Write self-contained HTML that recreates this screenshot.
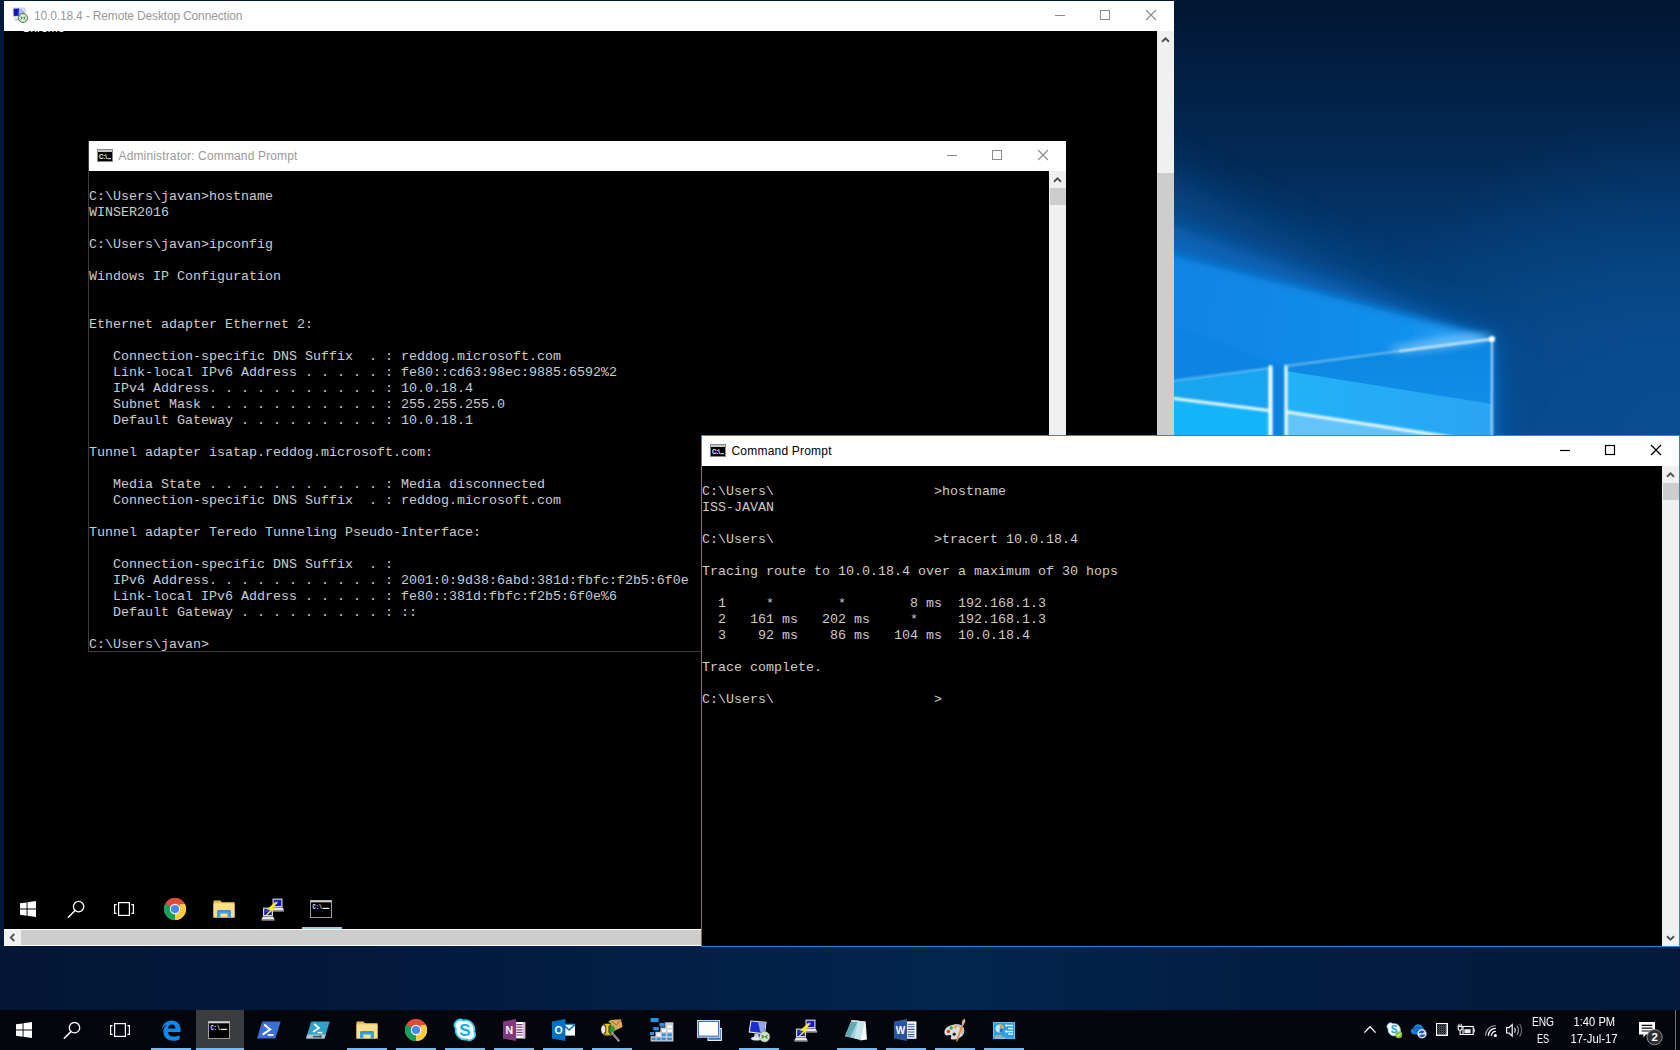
<!DOCTYPE html><html><head><meta charset="utf-8"><title>Desktop</title><style>
*{box-sizing:border-box;margin:0;padding:0}
html,body{width:1680px;height:1050px;overflow:hidden;background:#03193a}
body{position:relative;font-family:"Liberation Sans",sans-serif;font-size:12px}
.abs{position:absolute}
#wall{position:absolute;left:0;top:0;width:1680px;height:1010px}
.title{position:absolute;left:0;top:0;right:0;height:30px;background:#fff;font-size:12px;line-height:30px;white-space:nowrap}
.con{position:absolute;font-family:"Liberation Mono",monospace;font-size:13.333px;line-height:16px;color:#cccccc;white-space:pre;letter-spacing:0}
.sb{position:absolute;background:#f0f0f0}
.th{position:absolute;background:#cdcdcd}
svg{position:absolute;overflow:visible}
.tb{position:absolute;left:0;top:1010px;width:1680px;height:40px;background:#03060c}
.ul{position:absolute;height:2px;background:#76b9ed}
.tray{position:absolute;color:#fff;font-size:12px;line-height:14px;text-align:center;white-space:nowrap}
</style></head><body><svg id="wall" width="1680" height="1010" viewBox="0 0 1680 1010"><defs>
<linearGradient id="wbase" x1="0" y1="0" x2="0" y2="1">
 <stop offset="0" stop-color="#021631"/><stop offset="0.1" stop-color="#03224a"/><stop offset="0.17" stop-color="#032c59"/>
 <stop offset="0.24" stop-color="#04386f"/><stop offset="0.33" stop-color="#054484"/><stop offset="0.43" stop-color="#07488a"/><stop offset="0.6" stop-color="#053263"/><stop offset="0.93" stop-color="#03193a"/><stop offset="1" stop-color="#03152f"/>
</linearGradient>
<radialGradient id="wglow" cx="1230" cy="440" r="420" gradientUnits="userSpaceOnUse" gradientTransform="translate(1230 440) rotate(-18) scale(1 0.55) translate(-1230 -440)">
 <stop offset="0" stop-color="#0a86e4" stop-opacity="1"/><stop offset="0.45" stop-color="#0a7ad8" stop-opacity="0.95"/>
 <stop offset="0.75" stop-color="#0861b5" stop-opacity="0.6"/><stop offset="1" stop-color="#064a8c" stop-opacity="0"/>
</radialGradient>
<radialGradient id="wright" cx="1680" cy="440" r="330" gradientUnits="userSpaceOnUse">
 <stop offset="0" stop-color="#0a4f93" stop-opacity="0.9"/><stop offset="1" stop-color="#0a4f93" stop-opacity="0"/>
</radialGradient>
<linearGradient id="wbeam" x1="1492" y1="339" x2="1174" y2="300" gradientUnits="userSpaceOnUse">
 <stop offset="0" stop-color="#3fb0ff" stop-opacity="0.9"/><stop offset="0.25" stop-color="#1596f2" stop-opacity="0.75"/><stop offset="1" stop-color="#0c84e4" stop-opacity="0.55"/>
</linearGradient>
<linearGradient id="wpaneR" x1="0" y1="350" x2="0" y2="440" gradientUnits="userSpaceOnUse">
 <stop offset="0" stop-color="#0b87e2"/><stop offset="1" stop-color="#1493ea"/>
</linearGradient>
<linearGradient id="wpaneR2" x1="1285" y1="0" x2="1492" y2="0" gradientUnits="userSpaceOnUse">
 <stop offset="0" stop-color="#22b2f8"/><stop offset="1" stop-color="#2aa4f2"/>
</linearGradient>
<linearGradient id="wstrip" x1="0" y1="0" x2="1" y2="0">
 <stop offset="0" stop-color="#031634"/><stop offset="0.3" stop-color="#031b40"/><stop offset="0.57" stop-color="#03254f"/><stop offset="0.75" stop-color="#031d42"/><stop offset="1" stop-color="#031a3a"/>
</linearGradient>
<filter id="wb2" x="-20%" y="-20%" width="140%" height="140%"><feGaussianBlur stdDeviation="1.2"/></filter>
<filter id="wb5" filterUnits="userSpaceOnUse" x="1000" y="0" width="700" height="600"><feGaussianBlur stdDeviation="4"/></filter>
<filter id="wb16" filterUnits="userSpaceOnUse" x="1000" y="-100" width="800" height="700"><feGaussianBlur stdDeviation="10"/></filter>
<filter id="wb30" filterUnits="userSpaceOnUse" x="1000" y="-100" width="800" height="700"><feGaussianBlur stdDeviation="22"/></filter>
<clipPath id="wclipA"><rect x="1170" y="0" width="510" height="440"/></clipPath>
</defs><rect x="0" y="0" width="1680" height="1010" fill="url(#wbase)"/><rect x="1100" y="0" width="580" height="460" fill="url(#wright)"/><g clip-path="url(#wclipA)"><polygon points="1500,345 1100,140 1100,460 1500,460" fill="#0858a6" opacity="0.55" filter="url(#wb30)"/><polygon points="1496,340 1100,200 1100,460 1496,460" fill="#0a6ac2" opacity="0.85" filter="url(#wb16)"/><polygon points="1492,339 1100,236 1100,460 1492,460" fill="#0b84e2" filter="url(#wb5)"/><polygon points="1492,339 1100,238 1100,300 1285,367" fill="url(#wbeam)" filter="url(#wb5)"/></g><polygon points="1286,366 1492,339 1492,440 1286,440" fill="url(#wpaneR)"/><polygon points="1286,371 1492,404 1492,440 1286,440" fill="url(#wpaneR2)"/><polygon points="1286,412 1470,440 1286,440" fill="#62c4f9"/><polygon points="1174,381 1270,368 1270,440 1174,440" fill="#19a4f0"/><polygon points="1174,399 1270,411 1270,440 1174,440" fill="#14b4f8"/><rect x="1273" y="368" width="11" height="72" fill="#0a82e0"/><g filter="url(#wb2)" stroke="#fff" fill="none" stroke-linecap="round"><path d="M1270.5 367V440" stroke-width="4"/><path d="M1286 366V440" stroke-width="3"/><path d="M1286 366L1492 339" stroke-width="1.2" stroke="#bfe6ff"/><path d="M1400 351L1492 339" stroke-width="2" stroke="#fff"/><path d="M1492 339V440" stroke-width="1.6" stroke="#d8f0ff"/><path d="M1174 380.5L1270 368" stroke-width="1.2" stroke="#9fdcff"/><path d="M1174 398.5L1269 410.5" stroke-width="3" stroke="#e8f8ff"/><path d="M1288 412L1470 440" stroke-width="3" stroke="#e8f8ff"/></g><ellipse cx="1440" cy="343.5" rx="52" ry="5" transform="rotate(-7.7 1440 343.5)" fill="#a8dcff" opacity="0.6" filter="url(#wb5)"/><circle cx="1492" cy="339" r="3" fill="#fff" filter="url(#wb2)"/><rect x="0" y="940" width="1680" height="70" fill="url(#wstrip)"/><rect x="0" y="0" width="4" height="940" fill="#031a3d"/></svg><div class="abs" style="left:4px;top:1px;width:1170px;height:945px;background:#000"></div><div class="abs" style="left:4px;top:1px;width:1170px;height:30px;background:#fff"></div><div class="abs" style="left:34px;top:2px;height:30px;line-height:29px;color:#999;font-size:12px;letter-spacing:-0.16px;white-space:nowrap" id="rdptitle">10.0.18.4 - Remote Desktop Connection</div><svg class="abs" style="left:0;top:0" width="1" height="1"><path d="M1055 15.5h10" stroke="#8c8c8c" stroke-width="1" fill="none"/><rect x="1100.5" y="10.5" width="9" height="9" stroke="#8c8c8c" stroke-width="1" fill="none"/><path d="M1146 10l10 10M1156 10l-10 10" stroke="#8c8c8c" stroke-width="1.1" fill="none"/></svg><div class="abs" style="left:14px;top:31px;width:60px;height:2px;overflow:hidden"><div style="position:absolute;left:0;top:-8.6px;width:58px;text-align:center;color:#fff;font-size:12px;line-height:12px">Chrome</div></div><div class="sb" style="left:1157px;top:31px;width:17px;height:898px"></div><div class="th" style="left:1157px;top:173px;width:17px;height:739px"></div><svg class="abs" style="left:0;top:0" width="1" height="1"><path d="M1162.0 41.75L1165.5 38.25L1169.0 41.75" stroke="#505050" stroke-width="1.8" fill="none"/></svg><div class="sb" style="left:4px;top:929px;width:1170px;height:17px;background:#fff"></div><div class="sb" style="left:4px;top:930px;width:17px;height:15px"></div><div class="th" style="left:21px;top:930px;width:1136px;height:15px"></div><div class="sb" style="left:1157px;top:929px;width:17px;height:17px"></div><svg class="abs" style="left:0;top:0" width="1" height="1"><path d="M14.25 934.0L10.75 937.5L14.25 941.0" stroke="#505050" stroke-width="1.8" fill="none"/></svg><div class="abs" style="left:88px;top:141px;width:978px;height:511px;background:#000;border:1px solid #3c3c3c;border-top:none"></div><div class="abs" style="left:89px;top:141px;width:977px;height:30px;background:#fff"></div><svg class="abs" style="left:97px;top:149px" width="16" height="13" viewBox="0 0 16 13"><rect x="0" y="0" width="16" height="13" fill="#000"/><rect x="0.5" y="0.5" width="15" height="12" fill="none" stroke="#8a8a8a" stroke-width="1"/><rect x="1" y="1" width="14" height="2" fill="#c8c8c8"/><text x="2" y="10" font-family="Liberation Sans,sans-serif" font-weight="bold" font-size="6.5" fill="#fff" textLength="8" lengthAdjust="spacingAndGlyphs">C:\</text><rect x="10.4" y="9.2" width="3.6" height="1" fill="#fff"/></svg><div class="abs" style="left:118.5px;top:142px;height:30px;line-height:29px;color:#999;font-size:12px;letter-spacing:0.15px;white-space:nowrap" id="admtitle">Administrator: Command Prompt</div><svg class="abs" style="left:0;top:0" width="1" height="1"><path d="M947 155.5h10" stroke="#8c8c8c" stroke-width="1" fill="none"/><rect x="992.5" y="150.5" width="9" height="9" stroke="#8c8c8c" stroke-width="1" fill="none"/><path d="M1038 150l10 10M1048 150l-10 10" stroke="#8c8c8c" stroke-width="1.1" fill="none"/></svg><div class="sb" style="left:1049px;top:171px;width:17px;height:480px"></div><div class="th" style="left:1050px;top:188px;width:16px;height:17px"></div><svg class="abs" style="left:0;top:0" width="1" height="1"><path d="M1054.0 181.75L1057.5 178.25L1061.0 181.75" stroke="#505050" stroke-width="1.8" fill="none"/></svg><div class="con" style="left:89px;top:172.5px">
C:\Users\javan&gt;hostname
WINSER2016

C:\Users\javan&gt;ipconfig

Windows IP Configuration


Ethernet adapter Ethernet 2:

   Connection-specific DNS Suffix  . : reddog.microsoft.com
   Link-local IPv6 Address . . . . . : fe80::cd63:98ec:9885:6592%2
   IPv4 Address. . . . . . . . . . . : 10.0.18.4
   Subnet Mask . . . . . . . . . . . : 255.255.255.0
   Default Gateway . . . . . . . . . : 10.0.18.1

Tunnel adapter isatap.reddog.microsoft.com:

   Media State . . . . . . . . . . . : Media disconnected
   Connection-specific DNS Suffix  . : reddog.microsoft.com

Tunnel adapter Teredo Tunneling Pseudo-Interface:

   Connection-specific DNS Suffix  . :
   IPv6 Address. . . . . . . . . . . : 2001:0:9d38:6abd:381d:fbfc:f2b5:6f0e
   Link-local IPv6 Address . . . . . : fe80::381d:fbfc:f2b5:6f0e%6
   Default Gateway . . . . . . . . . : ::

C:\Users\javan&gt;</div><div class="abs" style="left:302px;top:927px;width:40px;height:2px;background:#9ccbe8"></div><div class="abs" style="left:701px;top:435px;width:979px;height:512px;background:#000;border:1px solid #2f86d1"></div><div class="abs" style="left:702px;top:436px;width:977px;height:30px;background:#fff"></div><svg class="abs" style="left:710px;top:444px" width="16" height="13" viewBox="0 0 16 13"><rect x="0" y="0" width="16" height="13" fill="#000"/><rect x="0.5" y="0.5" width="15" height="12" fill="none" stroke="#8a8a8a" stroke-width="1"/><rect x="1" y="1" width="14" height="2" fill="#c8c8c8"/><text x="2" y="10" font-family="Liberation Sans,sans-serif" font-weight="bold" font-size="6.5" fill="#fff" textLength="8" lengthAdjust="spacingAndGlyphs">C:\</text><rect x="10.4" y="9.2" width="3.6" height="1" fill="#fff"/></svg><div class="abs" style="left:731.5px;top:437px;height:30px;line-height:29px;color:#000;font-size:12px;letter-spacing:0.2px;white-space:nowrap" id="fronttitle">Command Prompt</div><svg class="abs" style="left:0;top:0" width="1" height="1"><path d="M1560 450.5h10" stroke="#000" stroke-width="1.2" fill="none"/><rect x="1605.5" y="445.5" width="9" height="9" stroke="#000" stroke-width="1.2" fill="none"/><path d="M1651 445l10 10M1661 445l-10 10" stroke="#000" stroke-width="1.32" fill="none"/></svg><div class="sb" style="left:1662px;top:466px;width:17px;height:480px"></div><div class="th" style="left:1663px;top:483px;width:16px;height:17px"></div><svg class="abs" style="left:0;top:0" width="1" height="1"><path d="M1667.0 476.75L1670.5 473.25L1674.0 476.75" stroke="#505050" stroke-width="1.8" fill="none"/></svg><svg class="abs" style="left:0;top:0" width="1" height="1"><path d="M1667.0 936.25L1670.5 939.75L1674.0 936.25" stroke="#505050" stroke-width="1.8" fill="none"/></svg><div class="con" style="left:702px;top:467.5px">
C:\Users\                    &gt;hostname
ISS-JAVAN

C:\Users\                    &gt;tracert 10.0.18.4

Tracing route to 10.0.18.4 over a maximum of 30 hops

  1     *        *        8 ms  192.168.1.3
  2   161 ms   202 ms     *     192.168.1.3
  3    92 ms    86 ms   104 ms  10.0.18.4

Trace complete.

C:\Users\                    &gt;</div><div class="tb"></div><svg class="abs" style="left:0px;top:0px" width="1" height="1" viewBox="0 0 1 1"><path d="M12.6 7.6L25.6 7.4L25.4 17L12.8 17.4Z" fill="#d0d4e0"/><path d="M13.6 8.8L19 8.6L18.8 15.8L13.8 16Z" fill="#1616b8"/><path d="M19 8.6L24.6 8.4L24.4 15.6L18.8 15.8Z" fill="#a9b6ee"/><path d="M20.6 8.5L24.6 8.4L24.5 11.4Z" fill="#e4e9fa"/><path d="M14 18.4L20 18L21 20.4L15 20.8Z" fill="#c9c9d0"/><circle cx="23" cy="18" r="4.5" fill="#d6edd0" stroke="#4f6c4f" stroke-width="1"/><path d="M20.7 16.6L22.3 18L20.7 19.4M25.3 16.6L23.7 18L25.3 19.4" fill="none" stroke="#2c7a2c" stroke-width="1"/></svg><svg class="abs" style="left:20px;top:901px" width="16" height="16" viewBox="0 0 16 16"><path fill="#fff" d="M0 2.3L6.6 1.4V7.6H0Z M7.5 1.25L16 0V7.6H7.5Z M0 8.5H6.6V14.7L0 13.8Z M7.5 8.5H16V16L7.5 14.8Z"/></svg><svg class="abs" style="left:0px;top:0px" width="1" height="1" viewBox="0 0 1 1"><circle cx="78.6" cy="906.6" r="5.2" fill="none" stroke="#fff" stroke-width="1.3"/><path d="M75.0 910.5L68.39999999999999 917.2" stroke="#fff" stroke-width="1.5" stroke-linecap="round"/></svg><svg class="abs" style="left:114px;top:902px" width="20" height="14" viewBox="0 0 20 14"><rect x="4.6" y="0.6" width="10.8" height="12.8" fill="none" stroke="#fff" stroke-width="1.2"/><path d="M2.6 2.6H0.6V11.4H2.6M17.4 2.6H19.4V11.4H17.4" fill="none" stroke="#fff" stroke-width="1.2"/></svg><svg class="abs" style="left:164.0px;top:898.0px" width="22" height="22" viewBox="-11 -11 22 22"><circle cx="0" cy="0" r="11" fill="#dd4b3e"/><path d="M0 0L-9.53 -5.5A11 11 0 0 0 0 11Z" fill="#1a9f5b"/><path d="M0 0L0 11A11 11 0 0 0 9.53 -5.5Z" fill="#fccd40"/><path d="M0 0L-9.53 -5.5L-4.4 -5.5Z" fill="#dd4b3e"/><path d="M-9.53 -5.5A11 11 0 0 1 9.53 -5.5L0 -5.5Z" fill="#dd4b3e"/><path d="M4.6 -5.1L9.8 -5.1A11 11 0 0 1 0.4 11L5 2.6Z" fill="#fccd40"/><path d="M-9.6 -5.4L-4.5 2.6L0.4 11A11 11 0 0 1 -9.6 -5.4Z" fill="#1a9f5b"/><circle cx="0" cy="0" r="5.2" fill="#f4f4f4"/><circle cx="0" cy="0" r="4.1" fill="#4687f1"/></svg><svg class="abs" style="left:213px;top:900px" width="22" height="18" viewBox="0 0 22 18"><path d="M0.5 1.2Q0.5 0.5 1.2 0.5H7.2L9 2.3H21.5V17.5H0.5Z" fill="#f5cd64"/><path d="M0.5 3.6H21.5V17.5H0.5Z" fill="#fbe08c"/><path d="M1 1H7L8.6 2.6H1Z" fill="#e5b64a"/><path d="M4 17.5V11.2Q4 10.2 5 10.2H17Q18 10.2 18 11.2V17.5H14.6V13.4H7.4V17.5Z" fill="#3d9fe2"/><path d="M5 10.2H17L18 11.6H4Z" fill="#2f8ad0"/></svg><svg class="abs" style="left:260.5px;top:897.5px" width="24" height="23" viewBox="0 0 24 23"><rect x="11.5" y="0.6" width="10" height="8.6" fill="#d4d4d8"/><rect x="12.7" y="1.7999999999999998" width="7.6" height="6.2" fill="#1818c8"/><rect x="13.7" y="3.0" width="3" height="2" fill="#3a3af0"/><path d="M9.9 12.2L11.5 9.6H21.5L23.1 12.2Z" fill="#e6e6ea"/><rect x="9.9" y="12.2" width="13.2" height="1.4" fill="#a9a9b0"/><rect x="2" y="9.6" width="10" height="8.6" fill="#d4d4d8"/><rect x="3.2" y="10.799999999999999" width="7.6" height="6.2" fill="#1818c8"/><rect x="4.2" y="12.0" width="3" height="2" fill="#3a3af0"/><path d="M0.3999999999999999 21.2L2 18.6H12L13.6 21.2Z" fill="#e6e6ea"/><rect x="0.3999999999999999" y="21.2" width="13.2" height="1.4" fill="#a9a9b0"/><path d="M14 4.6L6.6 11.4L10 11.4L5 17.4L14.2 10L10.8 10L16.4 4.8Z" fill="#f6ee1e" stroke="#f6ee1e" stroke-width="0.8" stroke-linejoin="round"/></svg><svg class="abs" style="left:310px;top:899.5px" width="22" height="18" viewBox="0 0 22 18"><rect x="0" y="0" width="22" height="18" fill="#000"/><rect x="0.5" y="0.5" width="21" height="17" fill="none" stroke="#9a9a9a" stroke-width="1"/><rect x="0.5" y="0.5" width="21" height="1.8" fill="#d0d0d0"/><text x="2.6" y="8.8" font-family="Liberation Mono,monospace" font-weight="bold" font-size="7" fill="#eee" textLength="9.6" lengthAdjust="spacingAndGlyphs">C:\</text><rect x="12.6" y="7.8" width="6.6" height="1.2" fill="#eee"/></svg><div class="abs" style="left:196px;top:1010px;width:48px;height:40px;background:#3a3c40"></div><svg class="abs" style="left:16px;top:1022px" width="16" height="16" viewBox="0 0 16 16"><path fill="#fff" d="M0 2.3L6.6 1.4V7.6H0Z M7.5 1.25L16 0V7.6H7.5Z M0 8.5H6.6V14.7L0 13.8Z M7.5 8.5H16V16L7.5 14.8Z"/></svg><svg class="abs" style="left:0px;top:0px" width="1" height="1" viewBox="0 0 1 1"><circle cx="74.5" cy="1027.7" r="5.2" fill="none" stroke="#fff" stroke-width="1.3"/><path d="M70.9 1031.6000000000001L64.3 1038.3" stroke="#fff" stroke-width="1.5" stroke-linecap="round"/></svg><svg class="abs" style="left:110px;top:1023px" width="20" height="14" viewBox="0 0 20 14"><rect x="4.6" y="0.6" width="10.8" height="12.8" fill="none" stroke="#fff" stroke-width="1.2"/><path d="M2.6 2.6H0.6V11.4H2.6M17.4 2.6H19.4V11.4H17.4" fill="none" stroke="#fff" stroke-width="1.2"/></svg><svg class="abs" style="left:161px;top:1020px" width="20" height="21" viewBox="0 0 20 21"><path fill="#1488ea" d="M0.8 9.4C1.4 4 5.4 0.4 10.6 0.4C16.4 0.4 19.6 4.6 19.6 9.6V12H7C7.2 15 9.6 16.6 12.8 16.6C15 16.6 17 16 18.6 15V19.2C16.8 20.2 14.6 20.7 12 20.7C6.2 20.7 2.4 17.2 2.4 11.6C2.4 8.6 3.8 6 6.2 4.4C3.6 5.4 1.8 7.2 0.8 9.4ZM7.1 8.4H14.4C14.3 6 13 4.4 10.8 4.4C8.8 4.4 7.4 6 7.1 8.4Z"/></svg><svg class="abs" style="left:208px;top:1020.5px" width="22" height="18" viewBox="0 0 22 18"><rect x="0" y="0" width="22" height="18" fill="#000"/><rect x="0.5" y="0.5" width="21" height="17" fill="none" stroke="#9a9a9a" stroke-width="1"/><rect x="0.5" y="0.5" width="21" height="1.8" fill="#d0d0d0"/><text x="2.6" y="8.8" font-family="Liberation Mono,monospace" font-weight="bold" font-size="7" fill="#eee" textLength="9.6" lengthAdjust="spacingAndGlyphs">C:\</text><rect x="12.6" y="7.8" width="6.6" height="1.2" fill="#eee"/></svg><svg class="abs" style="left:257px;top:1021px" width="24" height="18" viewBox="0 0 24 18"><path d="M5.6 0.4H23.2Q23.8 0.4 23.6 1L18.6 17Q18.4 17.6 17.8 17.6H0.6Q0 17.6 0.2 17L5 1Q5.2 0.4 5.6 0.4Z" fill="#3c6fd6"/><path d="M7.2 3.6L13.2 8.4L5.6 13.6" fill="none" stroke="#fff" stroke-width="2" stroke-linejoin="miter"/><path d="M10.8 14H16.6" stroke="#fff" stroke-width="1.8"/></svg><svg class="abs" style="left:306px;top:1020.5px" width="24" height="18" viewBox="0 0 24 18"><path d="M5.6 0.4H23.2Q23.8 0.4 23.6 1L18.6 17Q18.4 17.6 17.8 17.6H0.6Q0 17.6 0.2 17L5 1Q5.2 0.4 5.6 0.4Z" fill="#2fa4cb"/><path d="M1.4 13.4H19.8L18.6 17Q18.4 17.6 17.8 17.6H0.6Q0 17.6 0.2 17Z" fill="#b4c6cf"/><path d="M7.6 15.6H14.6" stroke="#4b5b63" stroke-width="1.6" stroke-linecap="round"/><circle cx="14.4" cy="15.6" r="1.3" fill="#4b5b63"/><path d="M8.2 3L13 7L7 11" fill="none" stroke="#fff" stroke-width="1.7" stroke-linejoin="miter"/><path d="M11.6 11.6H16.4" stroke="#fff" stroke-width="1.5"/></svg><svg class="abs" style="left:356px;top:1021px" width="22" height="18" viewBox="0 0 22 18"><path d="M0.5 1.2Q0.5 0.5 1.2 0.5H7.2L9 2.3H21.5V17.5H0.5Z" fill="#f5cd64"/><path d="M0.5 3.6H21.5V17.5H0.5Z" fill="#fbe08c"/><path d="M1 1H7L8.6 2.6H1Z" fill="#e5b64a"/><path d="M4 17.5V11.2Q4 10.2 5 10.2H17Q18 10.2 18 11.2V17.5H14.6V13.4H7.4V17.5Z" fill="#3d9fe2"/><path d="M5 10.2H17L18 11.6H4Z" fill="#2f8ad0"/></svg><svg class="abs" style="left:405.0px;top:1018.5999999999999px" width="22" height="22" viewBox="-11 -11 22 22"><circle cx="0" cy="0" r="11" fill="#dd4b3e"/><path d="M0 0L-9.53 -5.5A11 11 0 0 0 0 11Z" fill="#1a9f5b"/><path d="M0 0L0 11A11 11 0 0 0 9.53 -5.5Z" fill="#fccd40"/><path d="M0 0L-9.53 -5.5L-4.4 -5.5Z" fill="#dd4b3e"/><path d="M-9.53 -5.5A11 11 0 0 1 9.53 -5.5L0 -5.5Z" fill="#dd4b3e"/><path d="M4.6 -5.1L9.8 -5.1A11 11 0 0 1 0.4 11L5 2.6Z" fill="#fccd40"/><path d="M-9.6 -5.4L-4.5 2.6L0.4 11A11 11 0 0 1 -9.6 -5.4Z" fill="#1a9f5b"/><circle cx="0" cy="0" r="5.2" fill="#f4f4f4"/><circle cx="0" cy="0" r="4.1" fill="#4687f1"/></svg><svg class="abs" style="left:454px;top:1019px" width="22" height="22" viewBox="0 0 22 22"><path d="M11 1.2A9.4 9.4 0 0 1 20.2 12.6A5.6 5.6 0 0 1 12.6 20.4A9.4 9.4 0 0 1 1.8 9.6A5.6 5.6 0 0 1 9.4 1.6A9.4 9.4 0 0 1 11 1.2Z" fill="#fff" stroke="#2ccaf4" stroke-width="1.8"/><text x="11" y="17" text-anchor="middle" font-family="Liberation Sans,sans-serif" font-weight="bold" font-size="17" fill="#14a8e4">S</text></svg><svg class="abs" style="left:503px;top:1019px" width="23" height="22" viewBox="0 0 23 22"><rect x="9" y="3" width="13" height="16.4" fill="#fff"/><rect x="20" y="3" width="2.4" height="16.4" fill="#d9b9d6"/><path d="M13.5 5.6H19.6M13.5 8.2H19.6M13.5 10.8H19.6M13.5 13.4H19.6M13.5 16H19.6" stroke="#80397b" stroke-width="1.2"/><path d="M0 2.4L13.2 0V22L0 19.6Z" fill="#80397b"/><text x="6.4" y="15" text-anchor="middle" font-family="Liberation Sans,sans-serif" font-weight="bold" font-size="10.5" fill="#fff">N</text></svg><svg class="abs" style="left:551.5px;top:1019px" width="23" height="22" viewBox="0 0 23 22"><rect x="11" y="5" width="12" height="11.6" fill="#fff"/><path d="M11.6 5.8L17 11L22.6 5.8" fill="none" stroke="#0072c6" stroke-width="1.6"/><rect x="11" y="4.6" width="12" height="1.2" fill="#0072c6"/><path d="M0 2.4L13.4 0V22L0 19.6Z" fill="#0072c6"/><text x="6.6" y="15" text-anchor="middle" font-family="Liberation Sans,sans-serif" font-weight="bold" font-size="10.5" fill="#fff">O</text></svg><svg class="abs" style="left:599.5px;top:1018px" width="24" height="24" viewBox="0 0 24 24"><path d="M9 5L10.4 2L21 1.2L22.6 9L14 13Z" fill="#e0a85a"/><path d="M10.4 2L16.4 7L21 1.2" fill="none" stroke="#8a5a20" stroke-width="0.8"/><path d="M8 3.4L12.6 1.6L11 5.6Z" fill="#7bc043"/><ellipse cx="7.6" cy="11.6" rx="6.6" ry="6.4" fill="#e9e3e6"/><ellipse cx="11.6" cy="11.2" rx="3.2" ry="3.8" fill="#2e9a35"/><path d="M12.4 15.6L18.6 22.6" stroke="#b9a7a7" stroke-width="2.2" stroke-linecap="round"/><path d="M12.4 15.6L18 22" stroke="#5b3f6b" stroke-width="0.8"/><path d="M4 5.6H10.8V7.8H9V15H10.8V17.2H4V15H5.8V7.8H4Z" fill="#f1d321" stroke="#2a2000" stroke-width="0.9"/></svg><svg class="abs" style="left:649.6px;top:1018px" width="24" height="24" viewBox="0 0 24 24"><path d="M0.6 23.6V18.2H5.4V13.8H10.4V9.4H15.2V4.2H23.4V23.6Z" fill="#c9ccd4"/><rect x="1.6" y="19.6" width="4" height="2.6" fill="#2e8fdc"/><rect x="6.6" y="19.6" width="4" height="2.6" fill="#2e8fdc"/><rect x="11.6" y="19.6" width="4" height="2.6" fill="#2e8fdc"/><rect x="17.2" y="19.6" width="4.6" height="2.6" fill="#2e8fdc"/><rect x="6.8" y="15.4" width="3.8" height="2.8" fill="#fff"/><rect x="11.8" y="15.4" width="3.8" height="2.8" fill="#2e8fdc"/><rect x="17.4" y="15.4" width="4.4" height="2.8" fill="#2e8fdc"/><rect x="12" y="11.4" width="4" height="2.6" fill="#fff"/><rect x="17.4" y="11.4" width="4.4" height="2.6" fill="#fff"/><rect x="17.4" y="7.4" width="4.4" height="2.6" fill="#fff"/><rect x="0.6" y="0" width="8" height="4.2" fill="#2e8fdc"/><rect x="9.4" y="5" width="5.4" height="3.6" fill="#2e8fdc"/><rect x="3.2" y="9" width="5.6" height="3.4" fill="#2e8fdc"/><rect x="0" y="14" width="4" height="3" fill="#2e8fdc"/></svg><svg class="abs" style="left:697px;top:1020px" width="25" height="21" viewBox="0 0 25 21"><rect x="11" y="8.6" width="13.4" height="11.8" fill="#3b79c4" stroke="#fff" stroke-width="1"/><rect x="1" y="1" width="21" height="15.6" fill="#fdfdff" stroke="#3f77c0" stroke-width="2"/><rect x="0.4" y="0.4" width="22.2" height="16.8" fill="none" stroke="#dfe9f6" stroke-width="0.8"/></svg><svg class="abs" style="left:746.5px;top:1018.5px" width="24" height="24" viewBox="0 0 24 24"><path d="M3.4 1.4L19.6 2.8L18 15.6L1.6 13.6Z" fill="#dfe4ee"/><path d="M4.4 2.6L18.4 3.8L17.2 14.4L2.8 12.6Z" fill="#1c2fd0"/><path d="M11 3.2L18.4 3.8L17.2 14.4L13.6 14Z" fill="#93a5ea"/><path d="M7.6 14.4L11.6 14.8L11.8 18.6L7 18.2Z" fill="#c8ccd6"/><ellipse cx="9.4" cy="19.6" rx="5.6" ry="2" fill="#e2e4ea"/><circle cx="17.6" cy="17.8" r="5.2" fill="#dfe6dc" stroke="#7c8a78" stroke-width="0.6"/><circle cx="17.6" cy="17.8" r="4.2" fill="#cfe0c8"/><path d="M14.6 16.2L16.8 17.8L14.6 19.4M20.6 16.2L18.4 17.8L20.6 19.4" fill="none" stroke="#2c8a2c" stroke-width="1.1"/></svg><svg class="abs" style="left:794px;top:1018.5px" width="24" height="23" viewBox="0 0 24 23"><rect x="11.5" y="0.6" width="10" height="8.6" fill="#d4d4d8"/><rect x="12.7" y="1.7999999999999998" width="7.6" height="6.2" fill="#1818c8"/><rect x="13.7" y="3.0" width="3" height="2" fill="#3a3af0"/><path d="M9.9 12.2L11.5 9.6H21.5L23.1 12.2Z" fill="#e6e6ea"/><rect x="9.9" y="12.2" width="13.2" height="1.4" fill="#a9a9b0"/><rect x="2" y="9.6" width="10" height="8.6" fill="#d4d4d8"/><rect x="3.2" y="10.799999999999999" width="7.6" height="6.2" fill="#1818c8"/><rect x="4.2" y="12.0" width="3" height="2" fill="#3a3af0"/><path d="M0.3999999999999999 21.2L2 18.6H12L13.6 21.2Z" fill="#e6e6ea"/><rect x="0.3999999999999999" y="21.2" width="13.2" height="1.4" fill="#a9a9b0"/><path d="M14 4.6L6.6 11.4L10 11.4L5 17.4L14.2 10L10.8 10L16.4 4.8Z" fill="#f6ee1e" stroke="#f6ee1e" stroke-width="0.8" stroke-linejoin="round"/></svg><svg class="abs" style="left:844px;top:1019px" width="24" height="22" viewBox="0 0 24 22"><path d="M8.4 1.4L21.6 2.6L23 20.4L16.4 21.4Z" fill="#f4f6f7"/><path d="M7.6 1L20.4 2.4L16.2 20.8L1 17.2Z" fill="#9ed3d9"/><path d="M7.6 1L14 1.7L6 18.4L1 17.2Z" fill="#5fa9b4"/><path d="M14 1.7L20.4 2.4L16.2 20.8L10.4 19.4Z" fill="#c4e6ea"/><path d="M7.6 1L20.4 2.4L20 4L7 2.6Z" fill="#d8dcdf"/></svg><svg class="abs" style="left:894px;top:1019px" width="23" height="22" viewBox="0 0 23 22"><rect x="10" y="2.4" width="12.4" height="17.4" fill="#fff"/><path d="M13.6 5.2H20.6M13.6 7.8H20.6M13.6 10.4H20.6M13.6 13H20.6M13.6 15.6H20.6M13.6 17.8H20.6" stroke="#2b579a" stroke-width="1.1"/><path d="M0 2.4L13 0V22L0 19.6Z" fill="#2b579a"/><text x="6.4" y="15" text-anchor="middle" font-family="Liberation Sans,sans-serif" font-weight="bold" font-size="10" fill="#fff">W</text></svg><svg class="abs" style="left:942.5px;top:1017.5px" width="24" height="25" viewBox="0 0 24 25"><path d="M11 6.6C17 5.4 21.4 8.4 21.2 13C21 18 15.6 21.6 9.6 21.6C7.4 21.6 7.6 19.8 8.2 18.6C8.8 17.4 7.4 16.6 5.6 17.2C3.2 18 1.2 16.8 1.4 14C1.8 10 5.6 7.6 11 6.6Z" fill="#d9dde2"/><path d="M11 6.6C17 5.4 21.4 8.4 21.2 13C21.1 15 20.2 16.8 18.8 18.2C19.2 12 16 8.2 11 6.6Z" fill="#b9c0c9"/><circle cx="5.4" cy="13.4" r="1.7" fill="#d7372e"/><circle cx="8.2" cy="10" r="1.7" fill="#3aa64a"/><circle cx="12.4" cy="8.8" r="1.7" fill="#f0a22c"/><circle cx="11.2" cy="16.2" r="1.6" fill="#20242c"/><path d="M13 22.6L18.6 6.6L20.4 7.2L14.6 23.2Z" fill="#e0912f"/><path d="M18.6 6.6L19.4 2.6L21.6 0.6L22.4 3.4L20.4 7.2Z" fill="#d9b48a"/><path d="M13 22.6L14.6 23.2L13 25Z" fill="#5b4a3a"/></svg><svg class="abs" style="left:992.5px;top:1021.5px" width="22" height="17" viewBox="0 0 22 17"><rect x="0" y="0" width="22" height="17" fill="#2b9fe6"/><rect x="0.5" y="0.5" width="21" height="16" fill="none" stroke="#62c0f5" stroke-width="1"/><circle cx="6.6" cy="6.6" r="4" fill="#c9e9fa"/><path d="M6.6 6.6V2.6A4 4 0 0 1 10.6 6.6Z" fill="#f0a22c"/><path d="M6.6 6.6H10.6A4 4 0 0 1 6.6 10.6Z" fill="#2b6fc0"/><path d="M13 3.4H20M15 6.4H20M13 9.4H20M15 12H20" stroke="#d8f0fc" stroke-width="1.5"/><rect x="12.2" y="2.6" width="1.8" height="1.8" fill="#fff"/><rect x="12.2" y="8.6" width="1.8" height="1.8" fill="#fff"/><path d="M2 13.8H9" stroke="#f0a22c" stroke-width="1.6"/><path d="M2 15.4H12" stroke="#9bd6f7" stroke-width="0.8"/></svg><div class="ul" style="left:151px;top:1048px;width:40px"></div><div class="ul" style="left:196px;top:1048px;width:48px"></div><div class="ul" style="left:347px;top:1048px;width:40px"></div><div class="ul" style="left:396px;top:1048px;width:40px"></div><div class="ul" style="left:445px;top:1048px;width:40px"></div><div class="ul" style="left:494px;top:1048px;width:40px"></div><div class="ul" style="left:543px;top:1048px;width:40px"></div><div class="ul" style="left:592px;top:1048px;width:40px"></div><div class="ul" style="left:739px;top:1048px;width:40px"></div><div class="ul" style="left:837px;top:1048px;width:40px"></div><div class="ul" style="left:886px;top:1048px;width:40px"></div><div class="ul" style="left:935px;top:1048px;width:40px"></div><div class="ul" style="left:984px;top:1048px;width:40px"></div><svg class="abs" style="left:0px;top:0px" width="1" height="1" viewBox="0 0 1 1"><path d="M1364.4 1032.6L1370 1026.8L1375.6 1032.6" fill="none" stroke="#fff" stroke-width="1.3"/></svg><svg class="abs" style="left:1386.5px;top:1022.5px" width="15" height="15" viewBox="0 0 15 15"><path d="M7.2 0.8A6 6 0 0 1 13.2 7.8A3.4 3.4 0 0 1 8.6 12.6A6 6 0 0 1 1.2 6A3.4 3.4 0 0 1 6 1A6 6 0 0 1 7.2 0.8Z" fill="#fff" stroke="#7fe3f7" stroke-width="1"/><text x="7" y="10" text-anchor="middle" font-family="Liberation Sans,sans-serif" font-weight="bold" font-size="10" fill="#1aa6df">S</text><circle cx="11.7" cy="11.8" r="3.5" fill="#8cc43c"/><path d="M10.1 11.9L11.3 13.1L13.4 10.6" fill="none" stroke="#fff" stroke-width="1"/></svg><svg class="abs" style="left:1409.5px;top:1023px" width="18" height="16" viewBox="0 0 18 16"><path d="M1.2 9.6C0 7.6 1.4 5.4 3.4 5.4C3.8 2.8 6 1 8.6 1.2C10.8 1.4 12.4 2.8 13 4.8C14 5.4 14.4 6.6 14.2 7.8L8 11.4L3.2 11.2C2.2 11 1.6 10.4 1.2 9.6Z" fill="#1c7fd8"/><path d="M3.6 7.4C5 4.8 8 4 10.4 5.6M5.2 9.4C6.2 7.4 8 7 9.6 8" fill="none" stroke="#0a4fa0" stroke-width="1"/><circle cx="12" cy="10.8" r="4.6" fill="#e9eefc"/><path d="M8.6 10.4A3.5 3.5 0 0 1 15 9L12.4 10.2H8.6ZM15.4 11.2A3.5 3.5 0 0 1 9 12.6L11.6 11.4H15.4Z" fill="#2050d8"/></svg><svg class="abs" style="left:1436.3px;top:1023px" width="12" height="13" viewBox="0 0 12 13"><rect x="0.5" y="0.5" width="11" height="12" fill="#0a0c12" stroke="#fff" stroke-width="1"/><path d="M11.2 0V13M0 12.2H12" stroke="#fff" stroke-width="1.6"/><path d="M2.8 1V12M4.8 1V12M6.8 1V12M8.8 1V12M1 2.8H11M1 4.8H11M1 6.8H11M1 8.8H11M1 10.6H11" stroke="#8a8d94" stroke-width="0.7" stroke-dasharray="1 1"/></svg><svg class="abs" style="left:0px;top:0px" width="1" height="1" viewBox="0 0 1 1"><path d="M1459 1023.8V1026.4M1461.2 1023.8V1026.4" stroke="#fff" stroke-width="1"/><path d="M1458.2 1026.4H1462V1028.6Q1462 1030.4 1460.1 1030.4Q1458.2 1030.4 1458.2 1028.6Z" fill="none" stroke="#fff" stroke-width="1.1"/><path d="M1460.1 1030.4V1034.5H1463" fill="none" stroke="#fff" stroke-width="1.1"/><rect x="1463" y="1026.5" width="10.2" height="8" fill="none" stroke="#fff" stroke-width="1.1"/><rect x="1473.6" y="1028.6" width="1.1" height="3.8" fill="#fff"/><rect x="1464.4" y="1029.2" width="6.2" height="4" fill="#e4e8f4"/></svg><svg class="abs" style="left:0px;top:0px" width="1" height="1" viewBox="0 0 1 1"><circle cx="1495.4" cy="1035.4" r="1.5" fill="#fff"/><path d="M1491.4 1035.8A4.2 4.2 0 0 1 1495.8 1031.4" fill="none" stroke="#fff" stroke-width="1.3"/><path d="M1488.4 1035.8A7.2 7.2 0 0 1 1495.8 1028.4" fill="none" stroke="#fff" stroke-width="1.3"/><path d="M1485.6 1035.8A10 10 0 0 1 1495.8 1025.6" fill="none" stroke="#8a8d94" stroke-width="1.2"/></svg><svg class="abs" style="left:0px;top:0px" width="1" height="1" viewBox="0 0 1 1"><path d="M1506.6 1027.6H1509L1512.2 1024.6V1036L1509 1033H1506.6Z" fill="none" stroke="#fff" stroke-width="1.2" stroke-linejoin="miter"/><path d="M1514.6 1027.8Q1516.2 1030.3 1514.6 1032.8" fill="none" stroke="#fff" stroke-width="1.1"/><path d="M1517 1025.8Q1520 1030.3 1517 1034.8" fill="none" stroke="#9a9da4" stroke-width="1.1"/><path d="M1519.6 1023.8Q1523.6 1030.3 1519.6 1036.8" fill="none" stroke="#6a6d74" stroke-width="1.1"/></svg><div class="tray" style="left:1523px;top:1014px;width:41px;line-height:17.4px"><span style="display:inline-block;transform:scaleX(0.85)">ENG</span><br><span style="display:inline-block;transform:scaleX(0.76)">ES</span></div><div class="tray" style="left:1564px;top:1014px;width:61px;line-height:17.4px"><span style="display:inline-block;transform:scaleX(0.93)">1:40 PM</span><br><span style="display:inline-block;transform:scaleX(0.94)">17-Jul-17</span></div><svg class="abs" style="left:0px;top:0px" width="1" height="1" viewBox="0 0 1 1"><path d="M1639 1022H1655V1034.4H1646L1643.4 1037.4V1034.4H1639Z" fill="#fff"/><path d="M1641.6 1025.4H1652.4M1641.6 1028.2H1652.4M1641.6 1031H1652.4" stroke="#0a0c12" stroke-width="1.2"/><circle cx="1654.6" cy="1037.2" r="7.6" fill="#2e2f33" stroke="#8d8f94" stroke-width="1"/><text x="1654.6" y="1041.4" text-anchor="middle" font-family="Liberation Sans,sans-serif" font-weight="bold" font-size="11.5" fill="#fff">2</text></svg><div class="abs" style="left:1675px;top:1010px;width:1px;height:40px;background:#6f7277"></div></body></html>
